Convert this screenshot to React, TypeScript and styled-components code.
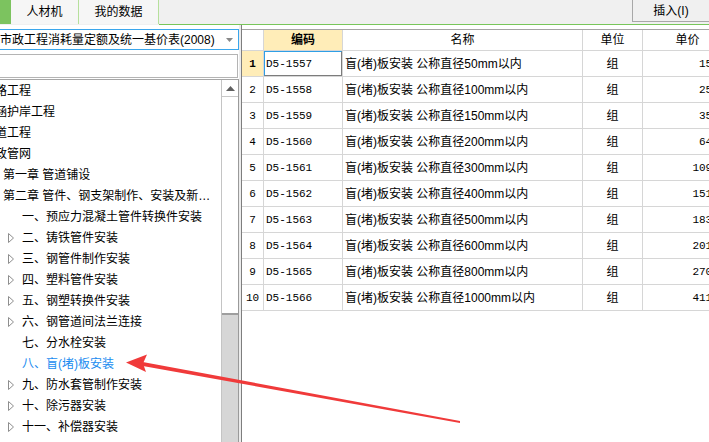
import React from "react";
import styled, { createGlobalStyle } from "styled-components";

const Global = createGlobalStyle`
  html, body { margin: 0; padding: 0; background: #fff; }
  body {
    font-family: "Liberation Sans", "Noto Sans CJK SC", sans-serif;
    font-size: 12px;
    color: #000;
  }
  * { box-sizing: border-box; }
`;

const Screen = styled.div`
  position: relative;
  width: 709px;
  height: 442px;
  overflow: hidden;
  background: #fff;
  display: flex;
  flex-direction: column;
`;

const TopBar = styled.div`
  display: flex;
  height: 25px;
  flex-shrink: 0;
  background: #f0f0f0;
`;

const TabAccent = styled.div`
  width: 11px;
  height: 24px;
  background: #7cc35f;
`;

const Tab = styled.div<{ $w: number }>`
  width: ${(p) => p.$w}px;
  height: 24px;
  border-right: 1px solid #b6e09c;
  background: #f6f6f6;
  display: flex;
  align-items: center;
  justify-content: center;
  line-height: 14px;
`;

const TopRest = styled.div`
  flex: 1;
  height: 25px;
  border-bottom: 1px solid #78c65a;
  display: flex;
  justify-content: flex-end;
  align-items: flex-start;
`;

const InsertButton = styled.div`
  width: 77px;
  height: 22px;
  border-left: 1px solid #a8a8a8;
  border-bottom: 1px solid #a8a8a8;
  background: #f0f0f0;
  display: flex;
  align-items: center;
  justify-content: center;
  line-height: 14px;
`;

const Body = styled.div`
  flex: 1;
  display: flex;
  min-height: 0;
`;

const LeftPanel = styled.div`
  width: 239px;
  flex-shrink: 0;
  display: flex;
  flex-direction: column;
  overflow: hidden;
  padding-top: 4px;
`;

const Dropdown = styled.div`
  height: 21px;
  margin-left: -3px;
  width: 242px;
  border: 1px solid #3aa6ec;
  display: flex;
  align-items: center;
  padding-left: 2px;
  padding-right: 5px;
  white-space: nowrap;
  line-height: 14px;
`;

const DropdownText = styled.span`
  flex: 1;
  overflow: hidden;
`;

const SearchBox = styled.div`
  height: 24px;
  margin-top: 4px;
  margin-left: -3px;
  width: 241px;
  border: 1px solid #b4b4b4;
  background: #fff;
`;

const TreeBox = styled.div`
  flex: 1;
  margin-top: 1px;
  display: flex;
  border-top: 1px solid #a6a6a6;
  border-right: 1px solid #9a9a9a;
  min-height: 0;
`;

const TreeList = styled.div`
  flex: 1;
  min-width: 0;
  overflow: hidden;
`;

const TreeRow = styled.div<{ $indent: number }>`
  height: 21px;
  display: flex;
  align-items: center;
  padding-left: ${(p) => p.$indent}px;
  white-space: nowrap;
`;

const ExpanderSlot = styled.span`
  width: 14px;
  flex-shrink: 0;
  display: flex;
  align-items: center;
`;

const TreeLabel = styled.span<{ $shift?: number; $active?: boolean }>`
  margin-left: ${(p) => p.$shift ?? 0}px;
  color: ${(p) => (p.$active ? "#1a8cf0" : "#000")};
  overflow: hidden;
  text-overflow: ellipsis;
  white-space: nowrap;
  line-height: 14px;
  min-width: 0;
`;

const Scrollbar = styled.div`
  width: 17px;
  flex-shrink: 0;
  border-left: 1px solid #c4c4c4;
  display: flex;
  flex-direction: column;
  background: #d6d6d6;
`;

const ScrollUp = styled.div`
  height: 17px;
  background: #fff;
  border-bottom: 1px solid #c8c8c8;
  display: flex;
  align-items: center;
  justify-content: center;
`;

const ScrollThumb = styled.div`
  height: 218px;
  background: #fff;
  border-bottom: 2px solid #9e9e9e;
`;

const Splitter = styled.div`
  width: 3px;
  flex-shrink: 0;
  background: #ececec;
  border-right: 1px solid #7e7e7e;
`;

const RightPanel = styled.div`
  flex: 1;
  min-width: 0;
  overflow: hidden;
  padding-top: 4px;
`;

const Grid = styled.div`
  display: grid;
  grid-template-columns: 22px 79px 240px 60px 90px;
  width: 491px;
  border-top: 1px solid #a4a4a4;
`;

const HeaderCell = styled.div<{ $hl?: boolean; $bold?: boolean }>`
  height: 21px;
  border-right: 1px solid #d6d6d6;
  border-bottom: 1px solid #d6d6d6;
  background: ${(p) => (p.$hl ? "#ffedb8" : "#fff")};
  font-weight: ${(p) => (p.$bold ? 700 : 400)};
  display: flex;
  align-items: center;
  justify-content: center;
  line-height: 14px;
`;

const Cell = styled.div<{
  $align?: "left" | "center" | "right";
  $hl?: boolean;
  $bold?: boolean;
  $mono?: boolean;
  $selected?: boolean;
}>`
  position: relative;
  height: 26px;
  border-right: 1px solid #d6d6d6;
  border-bottom: 1px solid #d6d6d6;
  background: ${(p) => (p.$hl ? "#ffedb8" : "#fff")};
  font-weight: ${(p) => (p.$bold ? 700 : 400)};
  display: flex;
  align-items: center;
  justify-content: ${(p) =>
    p.$align === "center" ? "center" : p.$align === "right" ? "flex-end" : "flex-start"};
  padding: 0 ${(p) => (p.$align === "right" ? "0" : "2px")} 0 2px;
  white-space: nowrap;
  overflow: hidden;
  line-height: 14px;
  font-family: ${(p) =>
    p.$mono
      ? '"Liberation Mono", "Noto Sans CJK SC", monospace'
      : '"Liberation Sans", "Noto Sans CJK SC", sans-serif'};
  font-size: ${(p) => (p.$mono ? "11px" : "12px")};

  ${(p) =>
    p.$selected
      ? `&::after {
          content: "";
          position: absolute;
          top: -1px;
          left: -1px;
          right: -1px;
          bottom: -1px;
          border: 2px solid;
          border-color: #2e9fe6 #7c7c7c #7c7c7c #2e9fe6;
        }`
      : ""}
`;

const Overlay = styled.svg`
  position: absolute;
  left: 0;
  top: 0;
  pointer-events: none;
`;

const Expander = () => (
  <svg width="7" height="10" viewBox="0 0 7 10">
    <path d="M0.5 0.5 L5.5 5 L0.5 9.5 Z" fill="none" stroke="#8e8e8e" strokeWidth="1" />
  </svg>
);

type TreeItem = { text: string; level: 1 | 2 | 3; exp?: boolean; active?: boolean };

const tree: TreeItem[] = [
  { text: "道路工程", level: 1 },
  { text: "桥涵护岸工程", level: 1 },
  { text: "隧道工程", level: 1 },
  { text: "市政管网", level: 1 },
  { text: "第一章 管道铺设", level: 2 },
  { text: "第二章 管件、钢支架制作、安装及新旧管连接", level: 2 },
  { text: "一、预应力混凝土管件转换件安装", level: 3 },
  { text: "二、铸铁管件安装", level: 3, exp: true },
  { text: "三、钢管件制作安装", level: 3, exp: true },
  { text: "四、塑料管件安装", level: 3, exp: true },
  { text: "五、钢塑转换件安装", level: 3, exp: true },
  { text: "六、钢管道间法兰连接", level: 3, exp: true },
  { text: "七、分水栓安装", level: 3 },
  { text: "八、盲(堵)板安装", level: 3, active: true },
  { text: "九、防水套管制作安装", level: 3, exp: true },
  { text: "十、除污器安装", level: 3, exp: true },
  { text: "十一、补偿器安装", level: 3, exp: true },
];

const rows = [
  { code: "D5-1557", dia: "50", price: "15.71" },
  { code: "D5-1558", dia: "100", price: "25.08" },
  { code: "D5-1559", dia: "150", price: "35.62" },
  { code: "D5-1560", dia: "200", price: "64.33" },
  { code: "D5-1561", dia: "300", price: "109.47" },
  { code: "D5-1562", dia: "400", price: "151.26" },
  { code: "D5-1563", dia: "500", price: "183.90" },
  { code: "D5-1564", dia: "600", price: "201.55" },
  { code: "D5-1565", dia: "800", price: "270.38" },
  { code: "D5-1566", dia: "1000", price: "411.72" },
];

export default function App() {
  return (
    <>
      <Global />
      <Screen>
        <TopBar>
          <TabAccent />
          <Tab $w={68}>人材机</Tab>
          <Tab $w={80}>我的数据</Tab>
          <TopRest>
            <InsertButton>插入(I)</InsertButton>
          </TopRest>
        </TopBar>
        <Body>
          <LeftPanel>
            <Dropdown>
              <DropdownText>市政工程消耗量定额及统一基价表(2008)</DropdownText>
              <svg width="7" height="4" viewBox="0 0 7 4">
                <path d="M0 0 H7 L3.5 4 Z" fill="#888" />
              </svg>
            </Dropdown>
            <SearchBox />
            <TreeBox>
              <TreeList>
                {tree.map((t, i) => (
                  <TreeRow key={i} $indent={t.level === 1 ? 0 : t.level === 2 ? 3 : 8}>
                    {t.level === 3 && <ExpanderSlot>{t.exp && <Expander />}</ExpanderSlot>}
                    <TreeLabel $shift={t.level === 1 ? -17 : 0} $active={t.active}>
                      {t.text}
                    </TreeLabel>
                  </TreeRow>
                ))}
              </TreeList>
              <Scrollbar>
                <ScrollUp>
                  <svg width="9" height="5" viewBox="0 0 9 5">
                    <path d="M0 5 L4.5 0 L9 5 Z" fill="#606060" />
                  </svg>
                </ScrollUp>
                <ScrollThumb />
              </Scrollbar>
            </TreeBox>
          </LeftPanel>
          <Splitter />
          <RightPanel>
            <Grid>
              <HeaderCell />
              <HeaderCell $hl $bold>编码</HeaderCell>
              <HeaderCell>名称</HeaderCell>
              <HeaderCell>单位</HeaderCell>
              <HeaderCell>单价</HeaderCell>
              {rows.map((r, i) => (
                <React.Fragment key={r.code}>
                  <Cell $align="center" $hl={i === 0} $bold={i === 0} $mono>
                    {i + 1}
                  </Cell>
                  <Cell $mono $selected={i === 0}>
                    {r.code}
                  </Cell>
                  <Cell>盲(堵)板安装 公称直径{r.dia}mm以内</Cell>
                  <Cell $align="center">组</Cell>
                  <Cell $align="right" $mono>
                    {r.price}
                  </Cell>
                </React.Fragment>
              ))}
            </Grid>
          </RightPanel>
        </Body>
        <Overlay width="709" height="442" viewBox="0 0 709 442">
          <polygon points="140,361.5 460,421 460,423 140,365.5" fill="#f03a3a" />
          <polygon points="126,362.5 147,354.5 143,363.5 146,372" fill="#f03a3a" />
        </Overlay>
      </Screen>
    </>
  );
}
